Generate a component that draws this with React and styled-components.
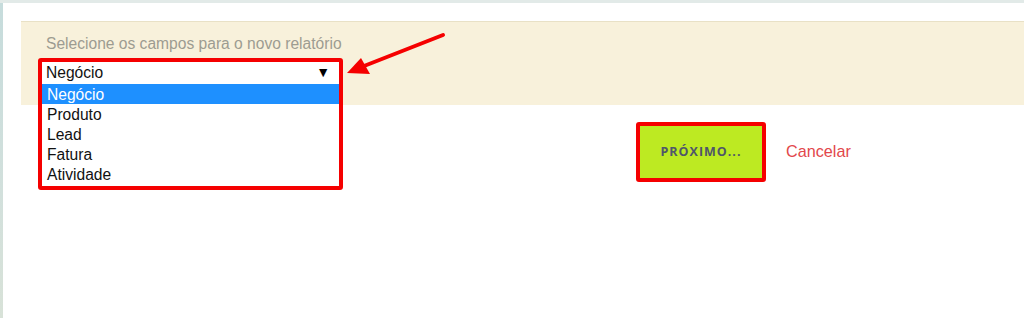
import React from 'react';
import styled, { createGlobalStyle } from 'styled-components';

const GlobalStyle = createGlobalStyle`
  html, body {
    margin: 0;
    padding: 0;
  }
  body {
    width: 1024px;
    height: 318px;
    overflow: hidden;
    background: linear-gradient(180deg, #c6dcdc 0%, #d2e0dc 60%, #d8e2d8 100%);
    font-family: "Liberation Sans", Arial, sans-serif;
  }
`;

const Page = styled.div`
  position: relative;
  height: 318px;
  padding: 3px 0 0 3px;
  box-sizing: border-box;
  background: linear-gradient(180deg, #e2eae8 0px, #e2eae8 3px, transparent 3px);
`;

const Panel = styled.div`
  height: 100%;
  background: #ffffff;
  padding: 18px 0 0 18px;
  box-sizing: border-box;
`;

const Band = styled.div`
  background: #f8f1db;
  border-top: 1px solid #e9e1c6;
  padding: 13px 0 21px 21px;
`;

const Label = styled.div`
  font-size: 15.6px;
  line-height: 18px;
  color: #9d9c91;
  margin: 0 0 9px 4px;
`;

const SelectField = styled.div`
  position: relative;
  width: 297px;
  height: 22px;
  background: #ffffff;
  box-sizing: border-box;
  padding: 0 9px 2px 4px;
  display: flex;
  align-items: flex-start;
  justify-content: space-between;
  font-size: 15.6px;
  line-height: 21px;
  color: #111;
`;

const Caret = styled.span`
  font-size: 14px;
  line-height: 21px;
  color: #000;
`;

const OptionList = styled.ul`
  position: absolute;
  top: 22px;
  left: 0;
  width: 297px;
  margin: 0;
  padding: 0 0 2px;
  list-style: none;
  background: #ffffff;
  z-index: 2;
`;

const Option = styled.li`
  height: 20px;
  box-sizing: border-box;
  padding: 1px 0 0 5px;
  font-size: 15.6px;
  line-height: 20px;
  color: ${({ $active }) => ($active ? '#ffffff' : '#111')};
  background: ${({ $active }) => ($active ? '#1e90ff' : 'transparent')};
`;

const Annotation = styled.div`
  position: absolute;
  top: -4px;
  left: -4px;
  width: 305px;
  height: 132px;
  box-sizing: border-box;
  border: 4px solid #f50000;
  border-radius: 3px;
  pointer-events: none;
  z-index: 3;
`;

const Actions = styled.div`
  display: flex;
  align-items: center;
  gap: 20px;
  margin: 17px 0 0 615px;
`;

const ButtonFrame = styled.div`
  border: 4px solid #f50000;
  border-radius: 3px;
  display: flex;
`;

const NextButton = styled.button`
  width: 122px;
  height: 52px;
  border: none;
  background: #bdea22;
  color: #4f566a;
  font-family: "Open Sans", sans-serif;
  font-weight: 700;
  font-size: 12.5px;
  letter-spacing: 1px;
  padding: 0 0 2px;
  cursor: pointer;
`;

const CancelLink = styled.a`
  font-size: 16.2px;
  color: #e2474b;
  text-decoration: none;
  margin-top: -2px;
`;

const Pointer = styled.svg`
  position: absolute;
  left: 340px;
  top: 28px;
  z-index: 4;
`;

const options = ['Negócio', 'Produto', 'Lead', 'Fatura', 'Atividade'];

const App = () => {
  return (
    <>
      <GlobalStyle />
      <Page>
        <Panel>
          <Band>
            <Label>Selecione os campos para o novo relatório</Label>
            <SelectField>
              <span>Negócio</span>
              <Caret>▼</Caret>
              <OptionList>
                {options.map((opt, i) => (
                  <Option key={opt} $active={i === 0}>{opt}</Option>
                ))}
              </OptionList>
              <Annotation />
            </SelectField>
          </Band>
          <Actions>
            <ButtonFrame>
              <NextButton>PRÓXIMO...</NextButton>
            </ButtonFrame>
            <CancelLink href="#">Cancelar</CancelLink>
          </Actions>
        </Panel>
        <Pointer width="110" height="52" viewBox="0 0 110 52">
          <line x1="103" y1="7" x2="24" y2="38" stroke="#f50000" strokeWidth="4" strokeLinecap="round" />
          <polygon points="7,45 21,30 30,46" fill="#f50000" />
        </Pointer>
      </Page>
    </>
  );
};

export default App;
